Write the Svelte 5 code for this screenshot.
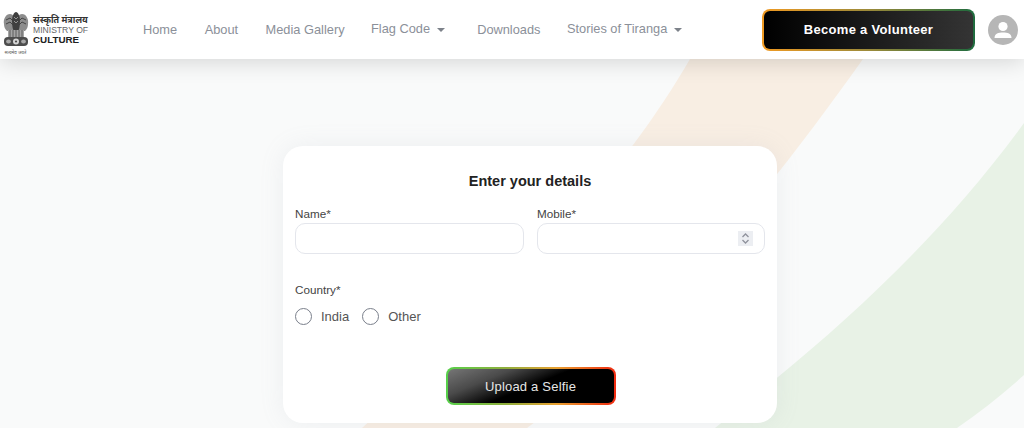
<script lang="ts">
	const navItems = [
		{ label: 'Home', caret: false },
		{ label: 'About', caret: false },
		{ label: 'Media Gallery', caret: false },
		{ label: 'Flag Code', caret: true },
		{ label: 'Downloads', caret: false },
		{ label: 'Stories of Tiranga', caret: true },
	];

	let name = $state('');
	let mobile = $state('');
	let country = $state('');
</script>

<div class="page">
	<!-- decorative flag bands behind everything -->
	<svg class="bands" viewBox="0 0 1024 428" width="1024" height="428" aria-hidden="true">
		<path d="M690 59 C640 145 560 250 362 428 L527 428 C650 340 770 190 863 59 Z" fill="#f8eee3" />
		<path d="M1024 123 C950 225 860 310 778 377 C755 396 735 412 715 428 L957 428 C980 412 1002 395 1024 375 Z" fill="#e8f2e6" />
	</svg>

	<header class="topbar">
		<div class="logo">
			<div class="emblem">
				<svg viewBox="0 0 26 36" width="26" height="36" aria-hidden="true">
					<!-- side lions -->
					<path d="M1 13 C0 8 3 3 7 3 C10 3 12 6 12 10 C12 15 11 18 9 20 L4 20 C2 18 1 16 1 13 Z" fill="#8d8d8d" />
					<path d="M25 13 C26 8 23 3 19 3 C16 3 14 6 14 10 C14 15 15 18 17 20 L22 20 C24 18 25 16 25 13 Z" fill="#8d8d8d" />
					<path d="M3 9 L7 7 L10 10 M3 13 L7 11 L10 14 M23 9 L19 7 L16 10 M23 13 L19 11 L16 14" fill="none" stroke="#444" stroke-width="1" />
					<!-- centre lion -->
					<path d="M9 10 C9 5 11 1 13 1 C15 1 17 5 17 10 C17 15 16 19 15 21 L11 21 C10 19 9 15 9 10 Z" fill="#3f3f3f" />
					<path d="M11 6 L13 8 L15 6 M11 10 L13 12 L15 10" fill="none" stroke="#aaa" stroke-width="0.8" />
					<!-- bodies -->
					<rect x="5" y="19" width="16" height="7" fill="#a5a5a5" />
					<path d="M7 19 V26 M10 19 V26 M13 19 V26 M16 19 V26 M19 19 V26" stroke="#555" stroke-width="0.9" />
					<!-- abacus with wheel -->
					<rect x="1" y="26" width="24" height="9" rx="4" fill="#4d4d4d" />
					<circle cx="13" cy="30.5" r="3" fill="#d6d6d6" />
					<circle cx="13" cy="30.5" r="1.1" fill="#4d4d4d" />
					<ellipse cx="5.5" cy="30.5" rx="2.4" ry="2" fill="#a8a8a8" />
					<ellipse cx="20.5" cy="30.5" rx="2.4" ry="2" fill="#a8a8a8" />
				</svg>
				<span class="motto">सत्यमेव जयते</span>
			</div>
			<div class="logo-text">
				<span class="hindi">संस्कृति मंत्रालय</span>
				<span class="ministry">MINISTRY OF</span>
				<span class="culture">CULTURE</span>
			</div>
		</div>

		<nav class="nav">
			{#each navItems as item (item.label)}
				<a href="#top" class="nav-link" class:has-caret={item.caret}>
					{item.label}
					{#if item.caret}<span class="caret"></span>{/if}
				</a>
			{/each}
		</nav>

		<button class="volunteer" type="button">Become a Volunteer</button>

		<div class="avatar">
			<svg viewBox="0 0 30 30" width="30" height="30" aria-hidden="true">
				<circle cx="15" cy="15" r="15" fill="#b6b6b6" />
				<circle cx="15" cy="11.5" r="4.6" fill="#fff" />
				<path d="M6.5 23 C6.5 18.5 10.5 17.5 15 17.5 C19.5 17.5 23.5 18.5 23.5 23 Z" fill="#fff" />
			</svg>
		</div>
	</header>

	<main class="content">
		<form class="card">
			<h2>Enter your details</h2>

			<div class="fields">
				<div class="field">
					<label for="name">Name*</label>
					<input id="name" type="text" bind:value={name} />
				</div>
				<div class="field">
					<label for="mobile">Mobile*</label>
					<div class="number-wrap">
						<input id="mobile" type="text" bind:value={mobile} />
						<span class="spinner">
							<svg viewBox="0 0 15 15" width="15" height="15" aria-hidden="true">
								<path d="M4.5 6 L7.5 3 L10.5 6 M4.5 9 L7.5 12 L10.5 9" fill="none" stroke="#8f929c" stroke-width="1.3" />
							</svg>
						</span>
					</div>
				</div>
			</div>

			<fieldset class="country">
				<legend>Country*</legend>
				<div class="radios">
					<label class="radio">
						<input type="radio" name="country" value="India" bind:group={country} />
						<span>India</span>
					</label>
					<label class="radio">
						<input type="radio" name="country" value="Other" bind:group={country} />
						<span>Other</span>
					</label>
				</div>
			</fieldset>

			<div class="actions">
				<button class="upload" type="button">Upload a Selfie</button>
			</div>
		</form>
	</main>
</div>

<style>
	:global(body) {
		margin: 0;
		background: #f9fafa;
	}

	.page {
		position: relative;
		width: 1024px;
		height: 428px;
		overflow: hidden;
		background: #f9fafa;
		font-family: 'Liberation Sans', Arial, sans-serif;
	}

	.bands {
		position: absolute;
		inset: 0;
	}

	/* -------- header -------- */
	.topbar {
		position: relative;
		display: flex;
		align-items: center;
		height: 59px;
		box-sizing: border-box;
		padding: 0 6px 0 2px;
		background: #fff;
		box-shadow: 0 3px 22px rgba(0, 0, 0, 0.15);
	}

	.logo {
		display: flex;
		align-items: center;
		gap: 4px;
		width: 141px;
		flex-shrink: 0;
	}

	.emblem {
		display: flex;
		flex-direction: column;
		align-items: center;
		width: 27px;
		padding-top: 6px;
	}

	.motto {
		margin-top: 2px;
		font-family: 'Noto Sans', 'Liberation Sans', sans-serif;
		font-size: 4.5px;
		line-height: 6px;
		color: #555;
		white-space: nowrap;
	}

	.logo-text {
		display: flex;
		flex-direction: column;
		line-height: 10px;
		color: #3c3c3c;
	}

	.hindi {
		font-family: 'Noto Sans', 'Liberation Sans', sans-serif;
		font-size: 9px;
		font-weight: 700;
		color: #333;
	}

	.ministry {
		font-size: 8.6px;
		color: #666;
	}

	.culture {
		font-size: 9.8px;
		font-weight: 700;
		color: #222;
	}

	.nav {
		display: flex;
		align-items: center;
		gap: 27.5px;
		width: 619px;
		flex-shrink: 0;
	}

	.nav-link {
		font-size: 12.8px;
		line-height: 16px;
		color: #8b9099;
		text-decoration: none;
		white-space: nowrap;
	}

	.nav-link.has-caret {
		position: relative;
		top: -1px;
		margin: 0 5px 0 -1px;
	}

	.caret {
		display: inline-block;
		width: 0;
		height: 0;
		margin-left: 3px;
		vertical-align: 1px;
		border-left: 4px solid transparent;
		border-right: 4px solid transparent;
		border-top: 4px solid #7d828a;
	}

	.volunteer {
		width: 213px;
		height: 42px;
		flex-shrink: 0;
		border: 2px solid transparent;
		border-radius: 8px;
		background:
			linear-gradient(90deg, #000, #343434) padding-box,
			linear-gradient(90deg, #f09a22, #9c8a3a 50%, #1e6b3e) border-box;
		color: #fff;
		font-family: inherit;
		font-size: 13px;
		font-weight: 700;
		letter-spacing: 0.3px;
		cursor: pointer;
	}

	.avatar {
		display: flex;
		margin-left: 13px;
	}

	/* -------- form card -------- */
	.content {
		position: relative;
		display: flex;
		justify-content: center;
		padding: 87px 0 0 36px;
	}

	.card {
		width: 494px;
		height: 277px;
		box-sizing: border-box;
		padding: 27px 12px 0;
		border-radius: 20px;
		background: #fff;
		box-shadow: 0 0 24px rgba(150, 160, 170, 0.12);
	}

	h2 {
		margin: 0 0 16px;
		font-size: 14.5px;
		line-height: 17px;
		font-weight: 700;
		text-align: center;
		color: #222;
	}

	.fields {
		display: grid;
		grid-template-columns: 229px 228px;
		gap: 13px;
	}

	.field label,
	legend {
		display: block;
		padding: 0;
		margin-bottom: 2px;
		font-size: 11.7px;
		line-height: 15px;
		color: #444;
	}

	.field input {
		display: block;
		width: 100%;
		height: 31px;
		box-sizing: border-box;
		border: 1px solid #e4e6ec;
		border-radius: 10px;
		background: #fff;
		outline: none;
	}

	.number-wrap {
		position: relative;
	}

	.spinner {
		position: absolute;
		top: 8px;
		right: 12px;
		display: flex;
		background: #eceef2;
	}

	.country {
		margin: 28px 0 0;
		padding: 0;
		border: 0;
	}

	.radios {
		display: flex;
		gap: 13px;
		margin-top: 9px;
	}

	.radio {
		display: flex;
		align-items: center;
		gap: 9px;
		font-size: 13px;
		line-height: 17px;
		color: #555;
	}

	.radio input {
		appearance: none;
		width: 17px;
		height: 17px;
		margin: 0;
		border: 1.7px solid #7a7f8b;
		border-radius: 50%;
		background: #fff;
	}

	.actions {
		display: flex;
		justify-content: center;
		margin: 42px 0 0 1px;
	}

	.upload {
		width: 170px;
		height: 38px;
		border: 2px solid transparent;
		border-radius: 8px;
		background:
			linear-gradient(158deg, #767676 0%, #4a4a4a 26%, #000 50%) padding-box,
			linear-gradient(90deg, #56d04a, #8fae3c 35%, #e8a030 65%, #f02a10) border-box;
		color: #e6e6e6;
		font-family: inherit;
		font-size: 13px;
		letter-spacing: 0.2px;
		cursor: pointer;
	}
</style>
